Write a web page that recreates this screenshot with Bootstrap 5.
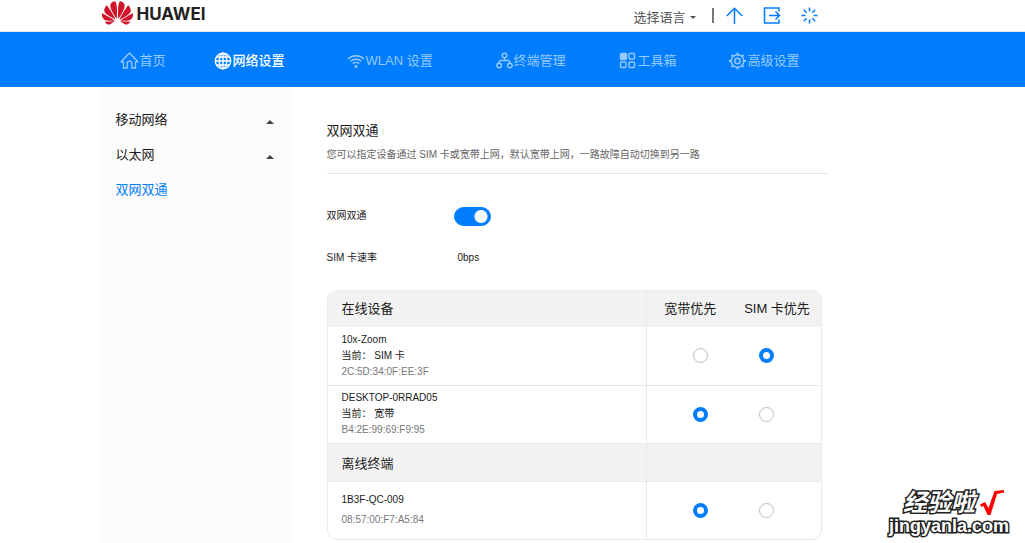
<!DOCTYPE html>
<html lang="zh-CN">
<head>
<meta charset="utf-8">
<meta name="viewport" content="width=device-width, initial-scale=1">
<title>双网双通</title>
<link rel="stylesheet" href="https://cdn.jsdelivr.net/npm/bootstrap@5.3.0/dist/css/bootstrap.min.css">
<style>
  :root { --hw-blue: #007dff; --hw-line: #e9e9e9; }
  body { font-family: "Liberation Sans", "Noto Sans CJK SC", sans-serif; font-size: 13px; line-height: 20px; color: #1a1a1a; background: #fff; }
  a { text-decoration: none; }
  .shell { width: calc(80% + 2px); margin: 0 auto; }
  .topbar { height: 32px; border-bottom: 1px solid var(--hw-line); }
  .topbar .shell { padding-right: 106px; height: 31px; }
  .brand { font: 700 17px/24px Inter, "Liberation Sans", sans-serif; color: #231f20; gap: 4px; padding-bottom: 6px; }
  .brand span { margin-top: 3px; }
  .lang { color: #555; font-size: 13px; line-height: 20px; }
  .lang::after { border-width: 3px; border-bottom: 0; margin-left: 4px; vertical-align: 3px; }
  .sep { width: 2px; height: 15px; background: #777; }
  .tools { color: var(--hw-blue); }
  .tools a { color: inherit; display: flex; }
  svg { display: block; flex: none; }
  .mainnav { background: var(--hw-blue); }
  .navgrid { display: grid; grid-template-columns: 94px 133px 149px 123px 109px auto; height: 55px; padding: 2px 0 0 18px; }
  .navgrid a { display: flex; align-items: center; gap: 1px; color: #96c9ff; white-space: nowrap; }
  .navgrid a.active { color: #fff; font-weight: 500; }
  .side { width: 189px; flex: none; background: #fcfcfc; padding: 15px 17px 0 14px; }
  .side a { height: 35px; color: #1a1a1a; }
  .side a.active { color: var(--hw-blue); }
  .up { width: 0; height: 0; border: 4px solid transparent; border-top: 0; border-bottom-color: #444; margin-top: 4px; }
  .main { padding: 34px 95px 4px 36px; }
  .main h1 { font-size: 13px; line-height: 20px; font-weight: 400; margin: 0 0 4px; }
  .desc { font-size: 10px; line-height: 20px; color: #666; margin: 0; padding-bottom: 8px; border-bottom: 1px solid var(--hw-line); }
  .field { font-size: 10px; line-height: 20px; display: grid; grid-template-columns: 127px auto; align-items: center; }
  .fields { padding-top: 31px; display: grid; gap: 22px; }
  .field .form-check-input { width: 37px; height: 19px; margin: 2px 0 0; border-color: var(--hw-blue); background-color: var(--hw-blue); box-shadow: none;
    background-image: radial-gradient(circle at 27px 50%, #fafafa 6px, rgba(250,250,250,0) 7px); background-size: 100% 100%; background-origin: border-box; }
  .panel { border: 1px solid var(--hw-line); border-radius: 10px; overflow: hidden; margin: 22px 7px 0 0; }
  .panel table { width: 100%; table-layout: fixed; border-collapse: collapse; }
  .panel th, .panel td { padding: 0; border: 0 solid var(--hw-line); font-weight: 400; vertical-align: middle; }
  .panel th { background: #f2f2f2; height: 36px; white-space: nowrap; }
  .panel th:first-child, .panel td:first-child { padding-left: 14px; border-right-width: 1px; }
  .panel td { height: 58px; font-size: 10px; line-height: 16px; }
  .panel tbody tr + tr > * { border-top-width: 1px; }
  .panel tr.offline th { height: 38px; padding-top: 3px; }
  .panel tr.sparse td { line-height: 20px; }
  .panel td.opt-l { text-align: right; padding-right: 26px; }
  .panel td.opt-r { padding-left: 25px; }
  .mac { color: #777; }
  .panel .form-check-input { display: block; width: 15px; height: 15px; margin: 0; border: 1px solid #bfbfbf; box-shadow: none; background-image: none; }
  .panel .opt-l .form-check-input { margin-left: auto; }
  .panel .form-check-input:checked { border: 4px solid var(--hw-blue); background-color: #fff; }
  .stamp { position: absolute; right: 16px; bottom: 8px; color: #fff; -webkit-text-stroke: 3px #222; paint-order: stroke fill; font-weight: 700; }
  .stamp-top { font-size: 24px; line-height: 24px; font-style: italic; padding-left: 14px; gap: 5px; }
  .stamp-url { font-size: 18px; line-height: 20px; }
</style>
<script src="https://cdn.jsdelivr.net/npm/bootstrap@5.3.0/dist/js/bootstrap.bundle.min.js"></script>
</head>
<body class="d-flex flex-column min-vh-100 position-relative">

<header class="topbar">
  <div class="shell d-flex align-items-center justify-content-between">
    <a href="#" class="brand d-flex align-items-center">
      <svg width="31" height="24" viewBox="0 2.9 24 18.3" fill="#d0142c" aria-hidden="true"><path d="M3.67 6.14S1.82 7.91 1.72 9.78v.35c.08 1.51 1.22 2.4 1.22 2.4 1.83 1.79 6.26 4.04 7.3 4.55 0 0 .06.03.1-.01l.02-.04v-.04C7.52 10.8 3.67 6.14 3.67 6.14zM9.65 18.6c-.02-.08-.1-.08-.1-.08l-7.38.26c.8 1.43 2.15 2.53 3.56 2.2.96-.25 3.16-1.78 3.88-2.3.06-.05.04-.08.04-.08zm.08-.78C6.49 15.63.21 12.28.21 12.28c-.15.46-.2.9-.21 1.3v.07c0 1.07.4 1.82.4 1.82.8 1.69 2.34 2.2 2.34 2.2.7.3 1.4.31 1.4.31.12.02 4.4 0 5.54 0 .05 0 .08-.05.08-.05v-.06c0-.03-.03-.05-.03-.05zM9.06 3.19a3.42 3.42 0 0 0-2.57 3.15v.41c.03.6.16 1.05.16 1.05.66 2.9 3.86 7.65 4.55 8.65.05.05.1.03.1.03a.1.1 0 0 0 .06-.1c1.06-10.6-1.11-13.42-1.11-13.42-.32.02-1.19.23-1.19.23zm8.3 2.27s-.49-1.8-2.44-2.28c0 0-.57-.14-1.17-.22 0 0-2.18 2.81-1.12 13.43.01.07.06.08.06.08.07.03.1-.03.1-.03.72-1.03 3.9-5.76 4.55-8.64 0 0 .36-1.4.02-2.34zm-2.92 13.07s-.07 0-.09.05c0 0-.01.07.03.1.7.51 2.85 2 3.88 2.3 0 0 .16.05.43.06h.14c.69-.02 1.9-.37 3-2.26zm7.83-8.41c.14-2.06-1.94-3.97-1.94-3.98 0 0-3.85 4.66-6.67 10.8 0 0-.03.08.02.13l.04.01h.06c1.06-.53 5.46-2.77 7.28-4.54 0 0 1.15-.93 1.21-2.42zm1.52 2.14s-6.28 3.37-9.52 5.55c0 0-.05.04-.03.11 0 0 .03.06.07.06 1.16 0 5.56 0 5.67-.02 0 0 .57-.02 1.27-.29 0 0 1.56-.5 2.37-2.27 0 0 .73-1.45.17-3.14z"/></svg>
      <span>HUAWEI</span>
    </a>
    <div class="tools d-flex align-items-center">
      <button type="button" class="lang dropdown-toggle btn p-0 pt-1 border-0 me-3">选择语言</button>
      <span class="sep"></span>
      <a href="#" class="ms-2 ps-1" aria-label="更新"><svg width="17" height="17" viewBox="0 0 17 17" fill="none" stroke="currentColor" stroke-width="1.5"><path d="M8.5 17V1.5M.8 9 8.5 1.2 16.2 9"/></svg></a>
      <a href="#" class="ms-3 ps-1" aria-label="退出"><svg width="18" height="17" viewBox="0 0 18 17" fill="none" stroke="currentColor" stroke-width="1.5"><path d="M16 4.5V1H1.5v15H16v-3.5M6 8.5h10.500M12.5 4.5l4 4-4 4"/></svg></a>
      <a href="#" class="ms-3 ps-1" aria-label="重启"><svg width="17" height="17" viewBox="0 0 17 17" fill="none" stroke="currentColor" stroke-width="1.5"><path d="M8.5.5v4M8.5 12.5v4M.5 8.5h4M12.5 8.5h4M2.800 2.800l2.900 2.900M11.300 11.300l2.900 2.900M14.200 2.800l-2.900 2.900M5.700 11.300l-2.900 2.900"/></svg></a>
    </div>
  </div>
</header>

<nav class="mainnav">
  <div class="shell navgrid">
    <a href="#"><svg width="19" height="18" viewBox="0 0 19 18" fill="none" stroke="currentColor" stroke-width="1.3" stroke-linejoin="round" stroke-linecap="round"><path d="M1 9.800 9.500 1 18 9.800h-2.500v6.200H11.800v-4.500a2.300 2.300 0 0 0-4.600 0V16H3.500V9.800z"/></svg>首页</a>
    <a href="#" class="active"><svg width="18" height="18" viewBox="0 0 18 18" fill="none" stroke="currentColor" stroke-width="1.4"><circle cx="9" cy="9" r="7.700"/><ellipse cx="9" cy="9" rx="3.700" ry="7.700"/><path d="M9 1.300v15.400M1.300 9h15.400M2.500 5h13M2.500 13h13"/></svg>网络设置</a>
    <a href="#"><svg width="18" height="16" viewBox="0 0 18 16" fill="none" stroke="currentColor" stroke-width="1.4"><path d="M1 6a11.500 11.500 0 0 1 16 0M3.500 8.500a8 8 0 0 1 11 0M5.800 10.800a4.700 4.700 0 0 1 6.400 0"/><circle cx="9" cy="13.500" r="1.600" fill="currentColor" stroke="none"/></svg>WLAN 设置</a>
    <a href="#"><svg width="17" height="18" viewBox="0 0 17 18" fill="none" stroke="currentColor" stroke-width="1.4"><circle cx="8.500" cy="3.500" r="2.300"/><circle cx="3.200" cy="13.500" r="2.300"/><circle cx="13.800" cy="13.500" r="2.300"/><path d="M8.500 5.800v2.700M3.200 11.200V10q0-1.500 1.500-1.500h7.600q1.500 0 1.500 1.500v1.200"/></svg>终端管理</a>
    <a href="#"><svg width="18" height="18" viewBox="0 0 18 18" fill="none" stroke="currentColor" stroke-width="1.4"><rect x="1.500" y="1.500" width="6" height="6" rx="1" fill="currentColor"/><rect x="10" y="1.500" width="5.500" height="5.500" rx="1"/><rect x="1.500" y="10" width="5.500" height="5.500" rx="1"/><rect x="10" y="10" width="5.500" height="5.500" rx="1"/></svg>工具箱</a>
    <a href="#"><svg width="19" height="18" viewBox="0 0 19 18" fill="none" stroke="currentColor" stroke-width="1.4"><circle cx="9.500" cy="9" r="6.300"/><circle cx="9.500" cy="9" r="2.700"/><path stroke-width="2" d="M9.500.500v2M9.500 15.500v2M1 9h2M16 9h2M3.500 3l1.400 1.400M14.100 13.600l1.400 1.400M15.500 3l-1.400 1.400M4.900 13.600l-1.400 1.400"/></svg>高级设置</a>
  </div>
</nav>

<div class="shell d-flex flex-grow-1">
  <aside class="side">
    <a href="#" class="d-flex align-items-center justify-content-between">移动网络<span class="up"></span></a>
    <a href="#" class="d-flex align-items-center justify-content-between">以太网<span class="up"></span></a>
    <a href="#" class="active d-flex align-items-center">双网双通</a>
  </aside>

  <main class="main flex-grow-1">
    <h1>双网双通</h1>
    <p class="desc">您可以指定设备通过 SIM 卡或宽带上网，默认宽带上网，一路故障自动切换到另一路</p>

    <div class="fields">
      <div class="field form-switch p-0">
        <label for="dual">双网双通</label>
        <input class="form-check-input float-none" type="checkbox" role="switch" id="dual" checked>
      </div>
      <div class="field">
        <span>SIM 卡速率</span><span class="ps-1">0bps</span>
      </div>
    </div>

    <div class="panel">
      <table>
        <colgroup><col><col style="width:87px"><col style="width:87px"></colgroup>
        <thead>
          <tr><th scope="col">在线设备</th><th scope="col" class="text-center">宽带优先</th><th scope="col" class="text-center">SIM 卡优先</th></tr>
        </thead>
        <tbody>
          <tr>
            <td><div>10x-Zoom</div><div>当前： SIM 卡</div><div class="mac">2C:5D:34:0F:EE:3F</div></td>
            <td class="opt-l"><input class="form-check-input" type="radio" name="d1" aria-label="宽带优先"></td>
            <td class="opt-r"><input class="form-check-input" type="radio" name="d1" aria-label="SIM 卡优先" checked></td>
          </tr>
          <tr>
            <td><div>DESKTOP-0RRAD05</div><div>当前： 宽带</div><div class="mac">B4:2E:99:69:F9:95</div></td>
            <td class="opt-l"><input class="form-check-input" type="radio" name="d2" aria-label="宽带优先" checked></td>
            <td class="opt-r"><input class="form-check-input" type="radio" name="d2" aria-label="SIM 卡优先"></td>
          </tr>
          <tr class="offline"><th scope="colgroup">离线终端</th><th colspan="2"></th></tr>
          <tr class="sparse">
            <td><div>1B3F-QC-009</div><div class="mac">08:57:00:F7:A5:84</div></td>
            <td class="opt-l"><input class="form-check-input" type="radio" name="d3" aria-label="宽带优先" checked></td>
            <td class="opt-r"><input class="form-check-input" type="radio" name="d3" aria-label="SIM 卡优先"></td>
          </tr>
        </tbody>
      </table>
    </div>
  </main>
</div>

<div class="stamp">
  <div class="stamp-top d-flex align-items-center">经验啦
    <svg width="24" height="26" viewBox="0 0 24 26" fill="#f00" aria-hidden="true"><path d="M0 14.500 5 12 8.500 18 14.500 1 24 0V2.500L17 4 10.500 25H7.500L3.500 16 1.500 17z"/></svg>
  </div>
  <div class="stamp-url">jingyanla.com</div>
</div>
</body>
</html>
